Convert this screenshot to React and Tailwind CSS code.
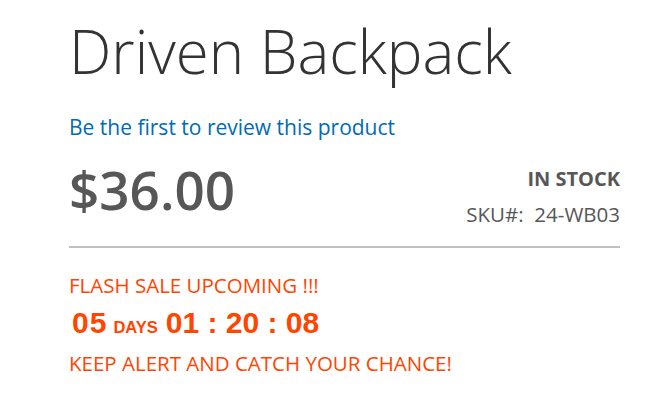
export default function App() {
  return (
    <div className="min-h-screen bg-white" style={{ fontFamily: '"Open Sans", "Liberation Sans", sans-serif' }}>
      <div className="pl-[69px] pr-[29px] pt-[18px]">
        <h1 className="text-[60px] leading-[66px] font-light text-[#333333]">Driven Backpack</h1>

        <a href="#" className="mt-[29px] block text-[21px] leading-[28px] text-[#006bb4]">
          Be the first to review this product
        </a>

        <div className="mt-[19px] flex items-start justify-between border-b-2 border-[#c1c1c1] pb-[19px]">
          <div className="text-[53px] leading-[60px] font-semibold text-[#575757]">$36.00</div>
          <div className="pt-[7px] text-right text-[#575757]">
            <div className="text-[20px] leading-[24px] font-bold uppercase">In stock</div>
            <div className="mt-[10px] text-[20.5px] leading-[26px]">
              SKU#:&nbsp; 24-WB03
            </div>
          </div>
        </div>

        <div className="mt-[23px] text-[#ff4500]">
          <div className="text-[20.5px] leading-[28px]">FLASH SALE UPCOMING !!!</div>
          <div className="mt-[6px] text-[30px] leading-[36px] font-bold" style={{ fontFamily: '"Liberation Sans", Arial, sans-serif' }}>
            <span className="ml-[3px] tracking-[1px]">05</span>
            <span className="ml-[6px] mr-[8px] text-[16.5px]">DAYS</span>
            <span>01 : 20 : 08</span>
          </div>
          <div className="mt-[4px] text-[20.5px] leading-[28px]">KEEP ALERT AND CATCH YOUR CHANCE!</div>
        </div>
      </div>
    </div>
  )
}
